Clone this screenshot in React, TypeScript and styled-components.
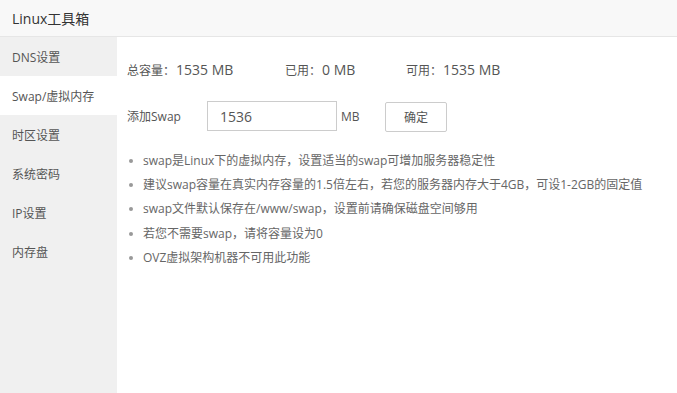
import React, { useState } from 'react';
import styled, { createGlobalStyle } from 'styled-components';

const GlobalStyle = createGlobalStyle`
  html, body { margin: 0; padding: 0; height: 100%; }
  body {
    font-family: "Open Sans", "Noto Sans CJK SC", sans-serif;
    color: #555;
    background: #fff;
  }
  #root { height: 100%; }
`;

const Page = styled.div`
  width: 677px;
  height: 393px;
  display: flex;
  flex-direction: column;
  overflow: hidden;
`;

const Header = styled.div`
  height: 36px;
  flex: 0 0 auto;
  display: flex;
  align-items: center;
  padding-left: 12px;
  background: #f8f8f8;
  border-bottom: 1px solid #e6e6e6;
  font-size: 14px;
  color: #333;
`;

const Body = styled.div`
  flex: 1;
  display: flex;
  min-height: 0;
`;

const Sidebar = styled.div`
  width: 117px;
  flex: 0 0 auto;
  background: #f0f0f0;
  display: flex;
  flex-direction: column;
`;

const NavItem = styled.div<{ $active?: boolean }>`
  height: 39px;
  display: flex;
  align-items: center;
  padding-left: 12px;
  font-size: 12px;
  color: #555;
  background: ${(p) => (p.$active ? '#fff' : 'transparent')};
  cursor: pointer;
`;

const Content = styled.div`
  flex: 1;
  padding: 23px 10px 0 10px;
  display: flex;
  flex-direction: column;
`;

const StatRow = styled.div`
  display: flex;
  align-items: baseline;
  height: 24px;
`;

const Stat = styled.div<{ $w: number }>`
  width: ${(p) => p.$w}px;
  display: flex;
  align-items: baseline;
`;

const StatLabel = styled.span`
  font-size: 12px;
  color: #555;
`;

const StatValue = styled.span`
  font-size: 14px;
  color: #555;
  margin-left: 1px;
`;

const SwapRow = styled.div`
  display: flex;
  align-items: center;
  margin-top: 16px;
`;

const SwapLabel = styled.span`
  width: 80px;
  font-size: 12px;
  color: #555;
`;

const Input = styled.input`
  width: 130px;
  height: 30px;
  box-sizing: border-box;
  border: 1px solid #ccc;
  padding: 0 12px;
  font-family: inherit;
  font-size: 14px;
  color: #555;
  outline: none;
`;

const Unit = styled.span`
  margin-left: 4px;
  width: 44px;
  font-size: 12px;
  color: #555;
`;

const Button = styled.button`
  width: 62px;
  height: 30px;
  margin-top: 2px;
  background: #fff;
  border: 1px solid #ccc;
  border-radius: 2px;
  font-family: inherit;
  font-size: 12px;
  color: #555;
  cursor: pointer;
`;

const Tips = styled.ul`
  margin: 17px 0 0 0;
  padding: 0;
  list-style: none;
`;

const Tip = styled.li`
  position: relative;
  padding-left: 16px;
  line-height: 24.2px;
  font-size: 12px;
  color: #666;
  &::before {
    content: '';
    position: absolute;
    left: 2px;
    top: 10px;
    width: 4px;
    height: 4px;
    border-radius: 50%;
    background: #999;
  }
`;

const navItems = ['DNS设置', 'Swap/虚拟内存', '时区设置', '系统密码', 'IP设置', '内存盘'];

const tips = [
  'swap是Linux下的虚拟内存，设置适当的swap可增加服务器稳定性',
  '建议swap容量在真实内存容量的1.5倍左右，若您的服务器内存大于4GB，可设1-2GB的固定值',
  'swap文件默认保存在/www/swap，设置前请确保磁盘空间够用',
  '若您不需要swap，请将容量设为0',
  'OVZ虚拟架构机器不可用此功能',
];

export default function App() {
  const [active, setActive] = useState(1);
  const [size, setSize] = useState('1536');

  return (
    <Page>
      <GlobalStyle />
      <Header>Linux工具箱</Header>
      <Body>
        <Sidebar>
          {navItems.map((name, i) => (
            <NavItem key={name} $active={i === active} onClick={() => setActive(i)}>
              {name}
            </NavItem>
          ))}
        </Sidebar>
        <Content>
          <StatRow>
            <Stat $w={158}>
              <StatLabel>总容量：</StatLabel>
              <StatValue>1535 MB</StatValue>
            </Stat>
            <Stat $w={121}>
              <StatLabel>已用：</StatLabel>
              <StatValue>0 MB</StatValue>
            </Stat>
            <Stat $w={120}>
              <StatLabel>可用：</StatLabel>
              <StatValue>1535 MB</StatValue>
            </Stat>
          </StatRow>
          <SwapRow>
            <SwapLabel>添加Swap</SwapLabel>
            <Input value={size} onChange={(e) => setSize(e.target.value)} />
            <Unit>MB</Unit>
            <Button>确定</Button>
          </SwapRow>
          <Tips>
            {tips.map((t) => (
              <Tip key={t}>{t}</Tip>
            ))}
          </Tips>
        </Content>
      </Body>
    </Page>
  );
}
